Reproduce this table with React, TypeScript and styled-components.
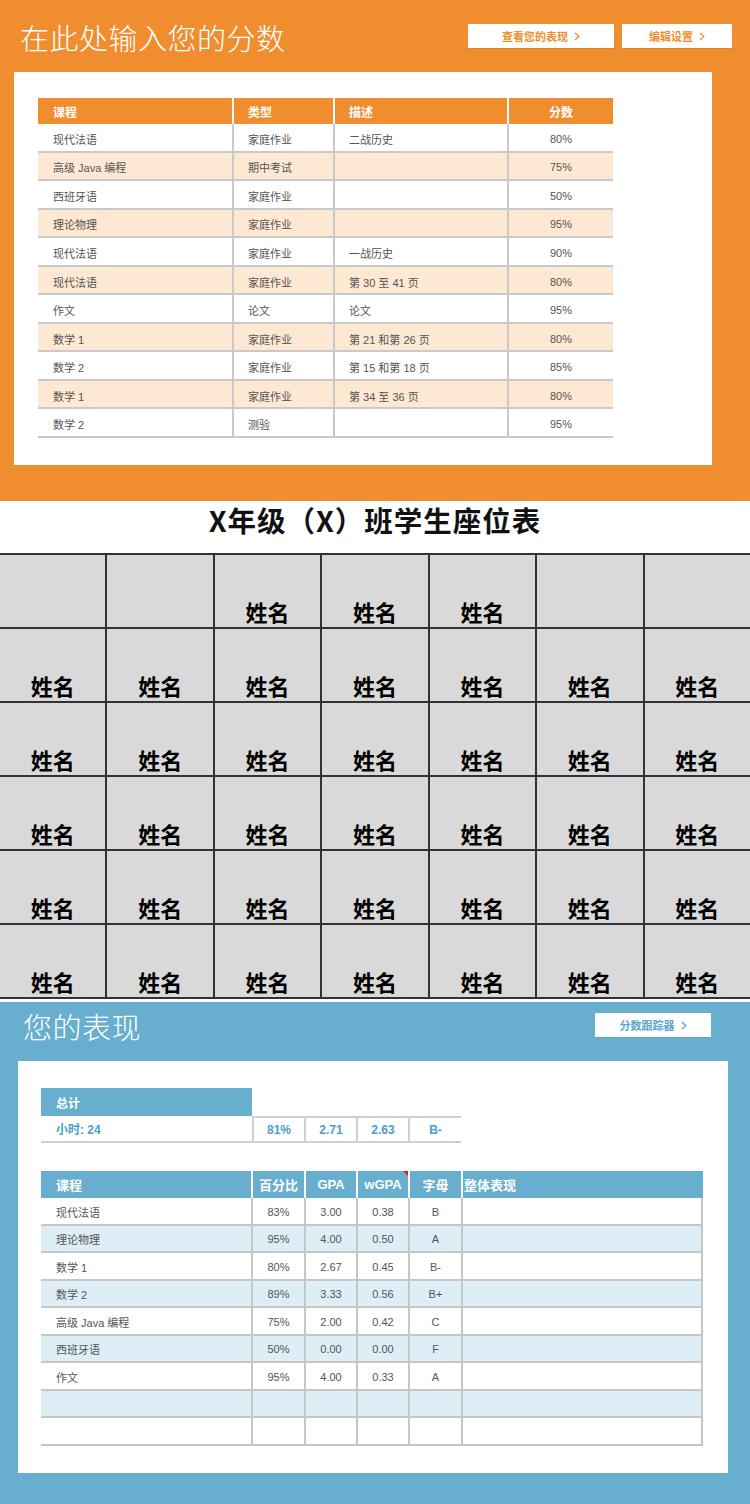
import React from "react";
import styled, { createGlobalStyle } from "styled-components";

const ORANGE = "#ef8d2f";
const BLUE = "#67aecf";
const CJK = `"Liberation Sans", "Noto Sans CJK SC", sans-serif`;

const Global = createGlobalStyle`
  html, body { margin: 0; padding: 0; background: #fff; }
  body { font-family: ${CJK}; width: 750px; }
  * { box-sizing: border-box; }
`;

const Page = styled.div`
  width: 750px;
  display: flex;
  flex-direction: column;
`;

/* ---------- shared ---------- */
const Section = styled.section<{ $bg: string; $h: number }>`
  background: ${(p) => p.$bg};
  height: ${(p) => p.$h}px;
  display: flex;
  flex-direction: column;
`;

const HeaderBar = styled.div<{ $top: number; $h: number; $left: number; $right: number }>`
  display: flex;
  align-items: flex-start;
  height: ${(p) => p.$h}px;
  padding: ${(p) => p.$top}px ${(p) => p.$right}px 0 ${(p) => p.$left}px;
`;

const Title = styled.h1`
  margin: 0;
  flex: 1;
  color: #fff;
  font-family: "Noto Sans CJK SC", sans-serif;
  font-weight: 300;
  font-size: 29px;
  line-height: 30px;
  letter-spacing: 0.5px;
`;

const ButtonGroup = styled.div`
  display: flex;
  gap: 8px;
  margin-top: 2px;
`;

const NavButton = styled.div<{ $w: number; $color: string }>`
  width: ${(p) => p.$w}px;
  height: 24px;
  background: #fff;
  color: ${(p) => p.$color};
  font-family: "Noto Sans CJK SC", sans-serif;
  font-weight: 700;
  font-size: 11px;
  display: flex;
  align-items: center;
  justify-content: center;
  gap: 6px;
  box-shadow: 0 1px 0 rgba(0, 0, 0, 0.08);
`;

const Chevron = ({ color }: { color: string }) => (
  <svg width="6" height="9" viewBox="0 0 6 9">
    <polyline points="1,1 4.8,4.5 1,8" fill="none" stroke={color} strokeWidth="1.3" />
  </svg>
);

const Panel = styled.div<{ $ml: number; $w: number; $h: number; $pt: number; $pl: number }>`
  background: #fff;
  margin-left: ${(p) => p.$ml}px;
  width: ${(p) => p.$w}px;
  height: ${(p) => p.$h}px;
  padding: ${(p) => p.$pt}px 0 0 ${(p) => p.$pl}px;
  display: flex;
  flex-direction: column;
`;

/* ---------- orange grade table ---------- */
const GradeCols = "194px 101px 174px 106px";

const GradeHead = styled.div`
  display: grid;
  grid-template-columns: ${GradeCols};
  height: 26px;
  width: 575px;
`;

const GradeHeadCell = styled.div<{ $center?: boolean; $first?: boolean }>`
  background: ${ORANGE};
  color: #fff;
  font-family: "Noto Sans CJK SC", sans-serif;
  font-weight: 700;
  font-size: 12px;
  display: flex;
  align-items: center;
  justify-content: ${(p) => (p.$center ? "center" : "flex-start")};
  padding-left: ${(p) => (p.$center ? 0 : p.$first ? 15 : 14)}px;
  border-left: ${(p) => (p.$first ? "none" : "2px solid #fff")};
`;

const GradeRow = styled.div<{ $alt: boolean }>`
  display: grid;
  grid-template-columns: ${GradeCols};
  width: 575px;
  height: 28.55px;
  background: ${(p) => (p.$alt ? "#fde8d3" : "#fff")};
  border-bottom: 2px solid #c9c9c9;
`;

const GradeCell = styled.div<{ $center?: boolean; $first?: boolean }>`
  color: #555;
  font-size: 11px;
  font-family: ${CJK};
  display: flex;
  align-items: center;
  padding-top: 3px;
  justify-content: ${(p) => (p.$center ? "center" : "flex-start")};
  padding-left: ${(p) => (p.$center ? 0 : p.$first ? 15 : 14)}px;
  border-left: ${(p) => (p.$first ? "none" : "2px solid #c9c9c9")};
`;

const gradeRows = [
  ["现代法语", "家庭作业", "二战历史", "80%"],
  ["高级 Java 编程", "期中考试", "", "75%"],
  ["西班牙语", "家庭作业", "", "50%"],
  ["理论物理", "家庭作业", "", "95%"],
  ["现代法语", "家庭作业", "一战历史", "90%"],
  ["现代法语", "家庭作业", "第 30 至 41 页", "80%"],
  ["作文", "论文", "论文", "95%"],
  ["数学 1", "家庭作业", "第 21 和第 26 页", "80%"],
  ["数学 2", "家庭作业", "第 15 和第 18 页", "85%"],
  ["数学 1", "家庭作业", "第 34 至 36 页", "80%"],
  ["数学 2", "测验", "", "95%"],
];

/* ---------- seating ---------- */
const SeatTitle = styled.h2`
  margin: 0;
  padding: 1px 0 15px;
  text-align: center;
  font-family: "Noto Sans CJK SC", sans-serif;
  font-weight: 700;
  font-size: 28.5px;
  letter-spacing: 1px;
  line-height: 36px;
  color: #111;
`;

const SeatGrid = styled.div`
  display: grid;
  grid-template-columns: repeat(7, 1fr);
  grid-auto-rows: 72px;
  gap: 2px;
  padding: 2px 0;
  background: #333;
  margin-bottom: 3px;
`;

const Seat = styled.div`
  background: #d9d9d9;
  display: flex;
  align-items: flex-end;
  justify-content: center;
  padding-bottom: 4px;
  font-family: "Noto Sans CJK SC", sans-serif;
  font-weight: 700;
  font-size: 22px;
  line-height: 24px;
  color: #000;
`;

/* ---------- blue performance ---------- */
const SumGrid = styled.div`
  display: grid;
  grid-template-columns: 211px 52px 52px 52px 53px;
  grid-template-rows: 28px 27px;
  width: 420px;
`;

const SumHead = styled.div`
  background: ${BLUE};
  color: #fff;
  font-family: "Noto Sans CJK SC", sans-serif;
  font-weight: 700;
  font-size: 12px;
  display: flex;
  align-items: center;
  padding-left: 15px;
`;

const SumCell = styled.div<{ $label?: boolean }>`
  color: #4b9fcb;
  font-weight: 700;
  font-size: 12px;
  font-family: ${CJK};
  display: flex;
  align-items: center;
  justify-content: ${(p) => (p.$label ? "flex-start" : "center")};
  padding-left: ${(p) => (p.$label ? 15 : 0)}px;
  border-bottom: 2px solid #cfcfcf;
  border-top: ${(p) => (p.$label ? "none" : "2px solid #cfcfcf")};
  border-left: ${(p) => (p.$label ? "none" : "2px solid #cfcfcf")};
`;

const PerfCols = "210px 53px 52px 52px 53px 242px";

const PerfHead = styled.div`
  display: grid;
  grid-template-columns: ${PerfCols};
  width: 662px;
  height: 27px;
  margin-top: 28px;
`;

const PerfHeadCell = styled.div<{ $align: "left" | "center" | "tight"; $first?: boolean }>`
  position: relative;
  background: ${BLUE};
  color: #fff;
  font-family: ${CJK};
  font-size: 13px;
  font-weight: 700;
  display: flex;
  align-items: center;
  justify-content: ${(p) => (p.$align === "center" ? "center" : "flex-start")};
  padding-left: ${(p) => (p.$align === "left" ? 15 : p.$align === "tight" ? 1 : 0)}px;
  border-left: ${(p) => (p.$first ? "none" : "2px solid #fff")};
`;

const CommentMark = styled.span`
  position: absolute;
  top: 0;
  right: 0;
  width: 0;
  height: 0;
  border-top: 5px solid #e02020;
  border-left: 5px solid transparent;
`;

const PerfRow = styled.div<{ $alt: boolean }>`
  display: grid;
  grid-template-columns: ${PerfCols};
  width: 662px;
  height: 27.5px;
  background: ${(p) => (p.$alt ? "#deeef6" : "#fff")};
  border-bottom: 2px solid #c6c6c6;
  border-right: 2px solid #c6c6c6;
`;

const PerfCell = styled.div<{ $first?: boolean }>`
  color: #555;
  font-size: 11px;
  font-family: ${CJK};
  display: flex;
  align-items: center;
  padding-top: 2px;
  justify-content: ${(p) => (p.$first ? "flex-start" : "center")};
  padding-left: ${(p) => (p.$first ? 15 : 0)}px;
  border-left: ${(p) => (p.$first ? "none" : "2px solid #c6c6c6")};
`;

const perfRows = [
  ["现代法语", "83%", "3.00", "0.38", "B", ""],
  ["理论物理", "95%", "4.00", "0.50", "A", ""],
  ["数学 1", "80%", "2.67", "0.45", "B-", ""],
  ["数学 2", "89%", "3.33", "0.56", "B+", ""],
  ["高级 Java 编程", "75%", "2.00", "0.42", "C", ""],
  ["西班牙语", "50%", "0.00", "0.00", "F", ""],
  ["作文", "95%", "4.00", "0.33", "A", ""],
  ["", "", "", "", "", ""],
  ["", "", "", "", "", ""],
];

const seatFirstRow = [false, false, true, true, true, false, false];

export default function App() {
  return (
    <Page>
      <Global />
      <Section $bg={ORANGE} $h={501}>
        <HeaderBar $top={22} $h={72} $left={20} $right={18}>
          <Title>在此处输入您的分数</Title>
          <ButtonGroup>
            <NavButton $w={146} $color={ORANGE}>
              查看您的表现 <Chevron color={ORANGE} />
            </NavButton>
            <NavButton $w={110} $color={ORANGE}>
              编辑设置 <Chevron color={ORANGE} />
            </NavButton>
          </ButtonGroup>
        </HeaderBar>
        <Panel $ml={14} $w={698} $h={393} $pt={26} $pl={24}>
          <GradeHead>
            <GradeHeadCell $first>课程</GradeHeadCell>
            <GradeHeadCell>类型</GradeHeadCell>
            <GradeHeadCell>描述</GradeHeadCell>
            <GradeHeadCell $center>分数</GradeHeadCell>
          </GradeHead>
          {gradeRows.map((r, i) => (
            <GradeRow key={i} $alt={i % 2 === 1}>
              <GradeCell $first>{r[0]}</GradeCell>
              <GradeCell>{r[1]}</GradeCell>
              <GradeCell>{r[2]}</GradeCell>
              <GradeCell $center>{r[3]}</GradeCell>
            </GradeRow>
          ))}
        </Panel>
      </Section>

      <SeatTitle>X年级（X）班学生座位表</SeatTitle>
      <SeatGrid>
        {Array.from({ length: 42 }).map((_, i) => {
          const filled = i < 7 ? seatFirstRow[i] : true;
          return <Seat key={i}>{filled ? "姓名" : ""}</Seat>;
        })}
      </SeatGrid>

      <Section $bg={BLUE} $h={502}>
        <HeaderBar $top={9} $h={59} $left={23} $right={39}>
          <Title>您的表现</Title>
          <ButtonGroup>
            <NavButton $w={116} $color="#5aa7cf">
              分数跟踪器 <Chevron color="#5aa7cf" />
            </NavButton>
          </ButtonGroup>
        </HeaderBar>
        <Panel $ml={18} $w={710} $h={412} $pt={27} $pl={23}>
          <SumGrid>
            <SumHead>总计</SumHead>
            <div />
            <div />
            <div />
            <div />
            <SumCell $label>小时: 24</SumCell>
            <SumCell>81%</SumCell>
            <SumCell>2.71</SumCell>
            <SumCell>2.63</SumCell>
            <SumCell>B-</SumCell>
          </SumGrid>
          <PerfHead>
            <PerfHeadCell $align="left" $first>课程</PerfHeadCell>
            <PerfHeadCell $align="center">百分比</PerfHeadCell>
            <PerfHeadCell $align="center">GPA</PerfHeadCell>
            <PerfHeadCell $align="center">
              wGPA
              <CommentMark />
            </PerfHeadCell>
            <PerfHeadCell $align="center">字母</PerfHeadCell>
            <PerfHeadCell $align="tight">整体表现</PerfHeadCell>
          </PerfHead>
          {perfRows.map((r, i) => (
            <PerfRow key={i} $alt={i % 2 === 1}>
              {r.map((c, j) => (
                <PerfCell key={j} $first={j === 0}>
                  {c}
                </PerfCell>
              ))}
            </PerfRow>
          ))}
        </Panel>
      </Section>
    </Page>
  );
}
